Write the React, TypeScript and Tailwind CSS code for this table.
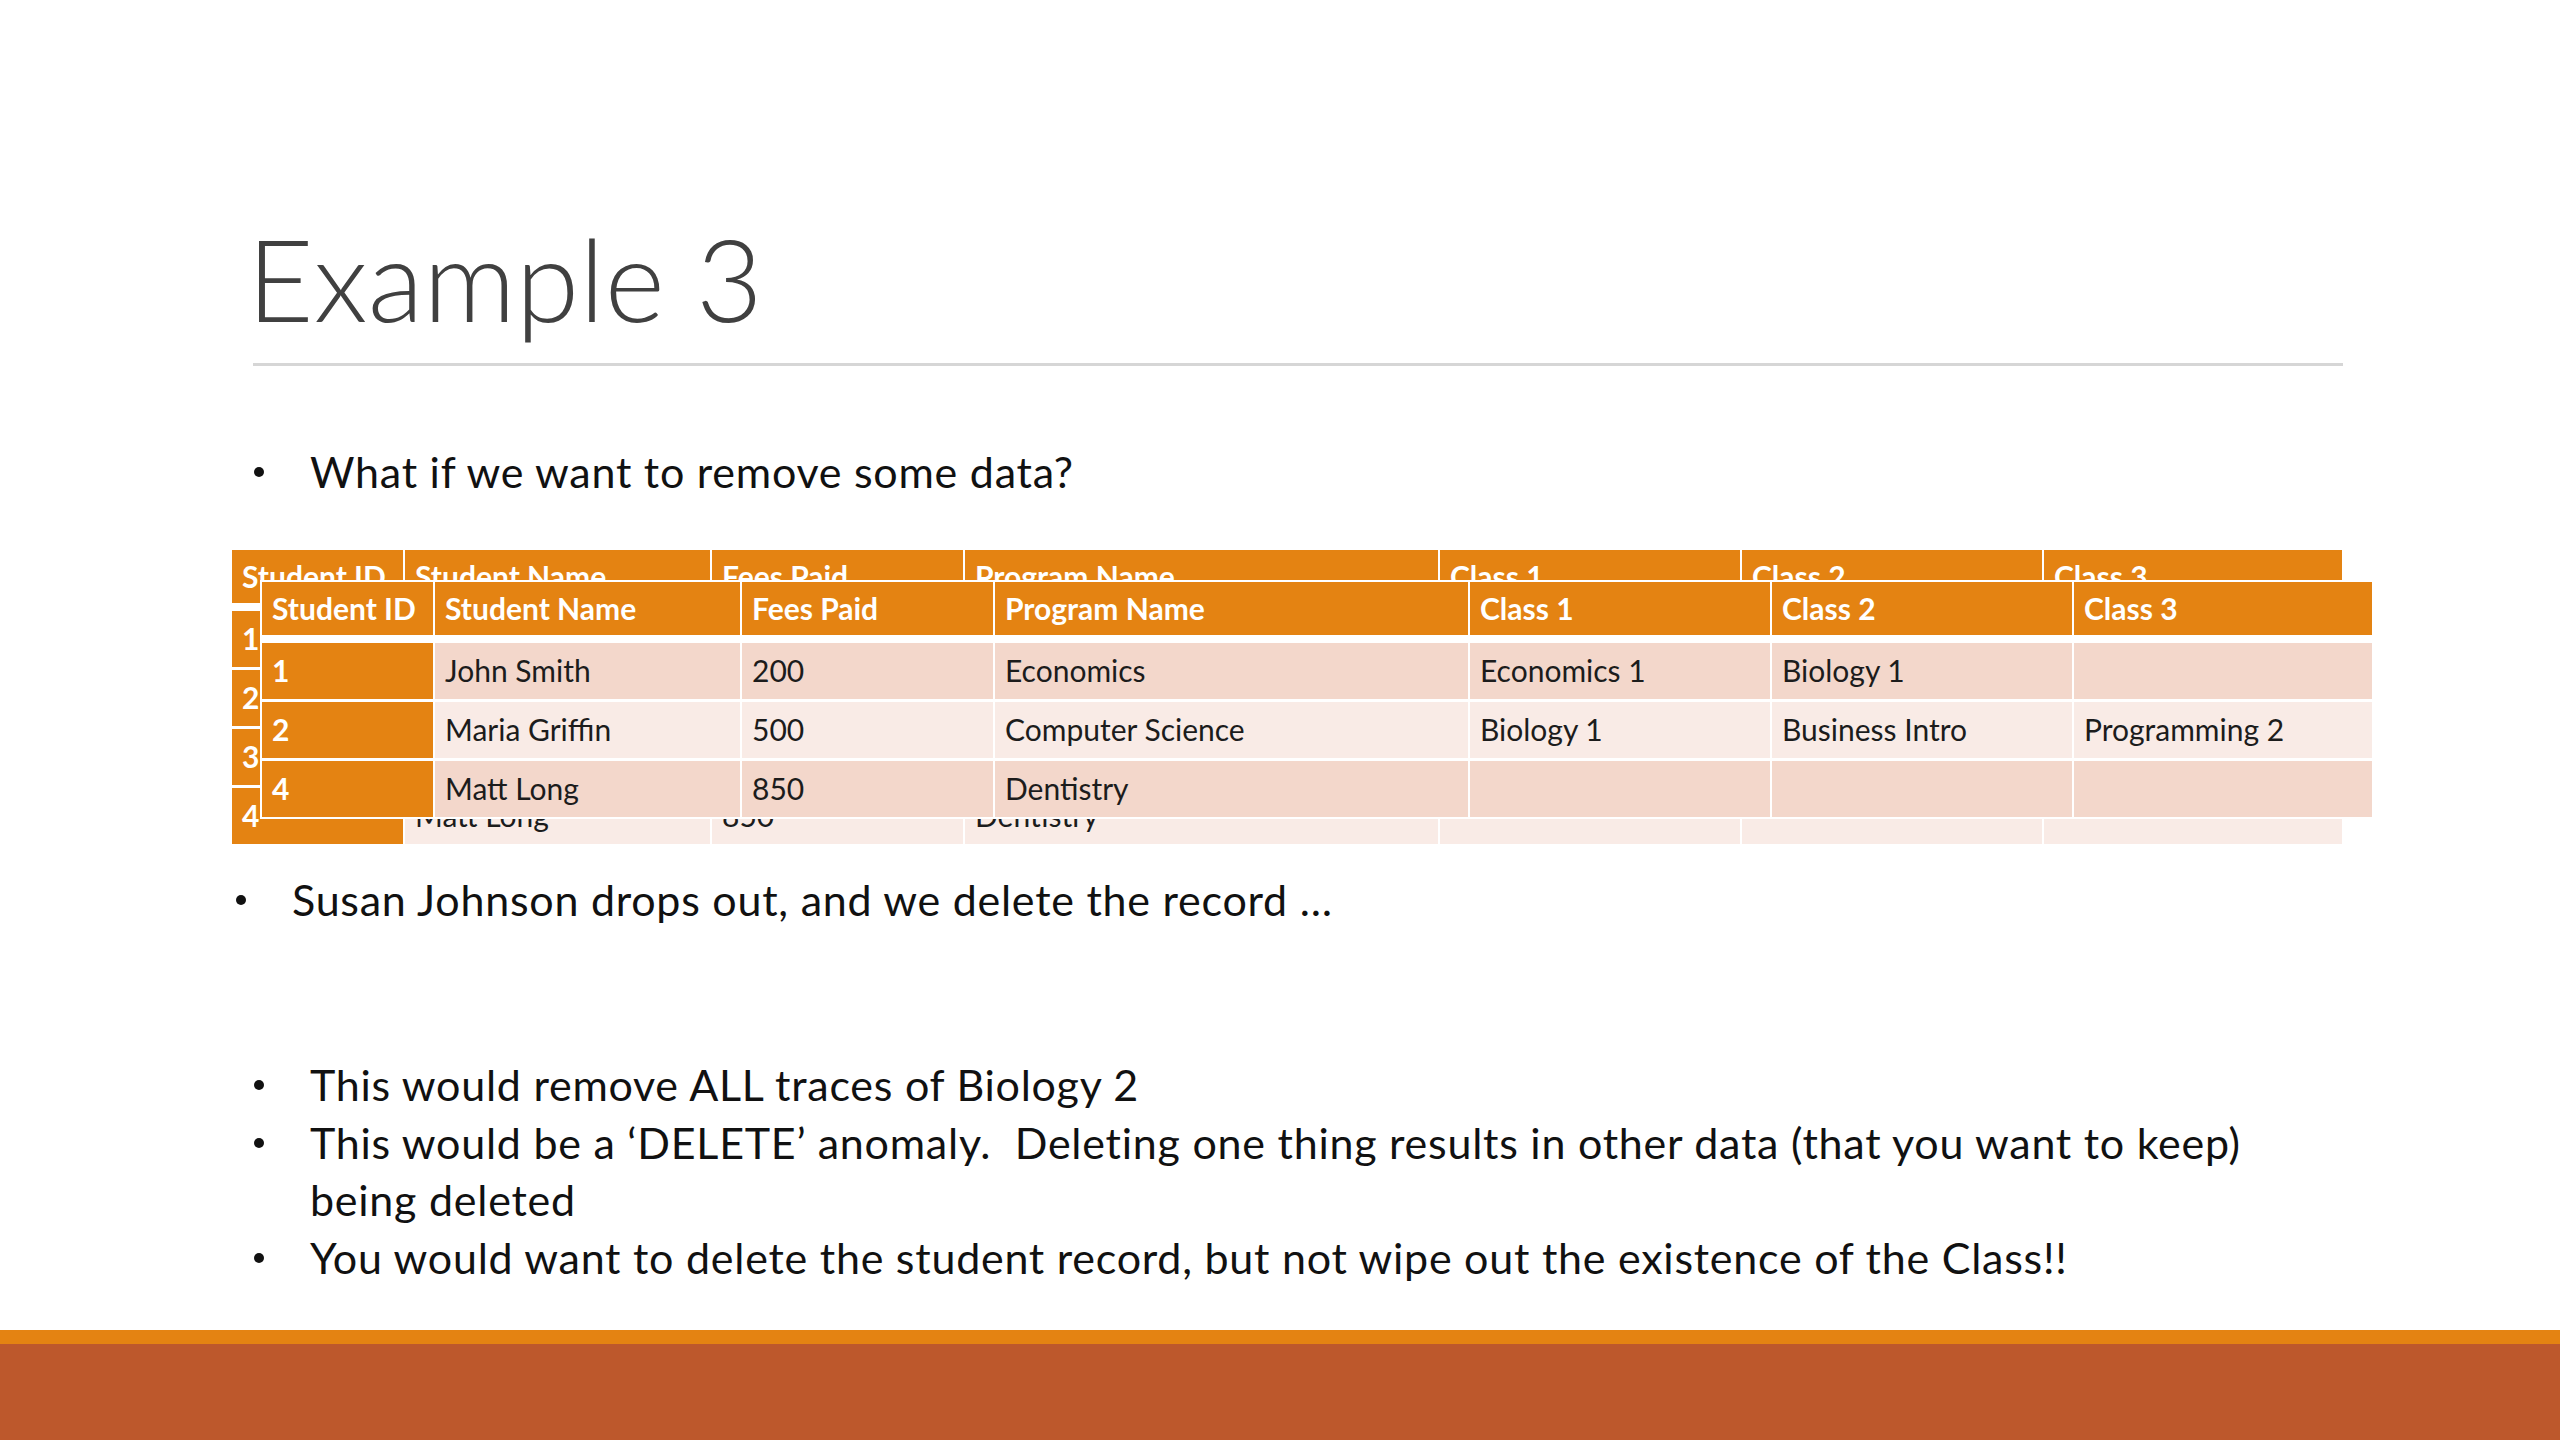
import clsx from "clsx"

const columns = ["Student ID", "Student Name", "Fees Paid", "Program Name", "Class 1", "Class 2", "Class 3"]
const widths = ["w-[171px]", "w-[307px]", "w-[253px]", "w-[475px]", "w-[302px]", "w-[302px]", "w-[300px]"]

// the table before the delete: only the id strip and the last row peek out from behind
const before = [
    ["1", "", "", "", "", "", ""],
    ["2", "", "", "", "", "", ""],
    ["3", "", "", "", "", "", ""],
    ["4", "Matt Long", "850", "Dentistry", "", "", ""],
]

const after = [
    ["1", "John Smith", "200", "Economics", "Economics 1", "Biology 1", ""],
    ["2", "Maria Griffin", "500", "Computer Science", "Biology 1", "Business Intro", "Programming 2"],
    ["4", "Matt Long", "850", "Dentistry", "", "", ""],
]

const StudentTable = ({ rows }: { rows: string[][] }) => {
    return (
        <div className="flex flex-col w-[2110px] bg-white text-[30px]">
            <div className="flex h-[53px] bg-[#e48312]">
                {columns.map((c, i) => (
                    <div
                        key={c}
                        className={clsx(widths[i], "flex items-center px-[10px] whitespace-nowrap font-bold text-white", i > 0 && "border-l-2 border-white")}
                    >
                        {c}
                    </div>
                ))}
            </div>
            <div className="flex flex-col gap-[3px] pt-[8px]">
                {rows.map((row, ri) => (
                    <div key={ri} className={clsx("flex h-[56px]", ri % 2 === 0 ? "bg-[#f3d7cb]" : "bg-[#f9ebe6]")}>
                        {row.map((v, ci) => (
                            <div
                                key={ci}
                                className={clsx(
                                    widths[ci],
                                    "flex items-center px-[10px] whitespace-nowrap",
                                    ci === 0 ? "bg-[#e48312] font-bold text-white" : "text-[#1c1c1c]",
                                    ci > 0 && "border-l-2 border-white"
                                )}
                            >
                                {v}
                            </div>
                        ))}
                    </div>
                ))}
            </div>
        </div>
    )
}

const Bullet = ({ children }: { children: React.ReactNode }) => (
    <div className="grid grid-cols-[57px_1fr] items-start">
        <span className="mt-[24px] ml-[1px] w-[10px] h-[10px] rounded-full bg-[#111]" />
        <span className="whitespace-nowrap">{children}</span>
    </div>
)

const App = () => {
    return (
        <div className="w-[2560px] h-[1440px] bg-white flex flex-col overflow-hidden font-[Lato,sans-serif]">
            <h1 className="pt-[220px] pl-[247px] text-[115px] leading-[114px] font-light text-[#404040]">
                Example 3
            </h1>
            <div className="mt-[29px] ml-[253px] w-[2090px] h-[3px] bg-[#d6d6d6]" />

            <div className="mt-[77px] pl-[253px] text-[43px] leading-[57.6px] tracking-[0.75px] text-[#111]">
                <Bullet>What if we want to remove some data?</Bullet>
            </div>

            <div className="mt-[49px] ml-[232px] relative w-[2110px]">
                <StudentTable rows={before} />
                <div className="absolute left-[30px] top-[32px] ring-2 ring-white">
                    <StudentTable rows={after} />
                </div>
            </div>

            <div className="mt-[27px] pl-[235px] text-[43px] leading-[57.6px] tracking-[0.75px] text-[#111]">
                <Bullet>Susan Johnson drops out, and we delete the record …</Bullet>
            </div>

            <div className="mt-[128px] pl-[253px] text-[43px] leading-[57.6px] tracking-[0.75px] text-[#111]">
                <Bullet>This would remove ALL traces of Biology 2</Bullet>
                <Bullet>
                    This would be a ‘DELETE’ anomaly.{"\u00a0 "}Deleting one thing results in other data (that you want to keep)
                    <br />
                    being deleted
                </Bullet>
                <Bullet>You would want to delete the student record, but not wipe out the existence of the Class!!</Bullet>
            </div>

            <div className="mt-auto h-[14px] bg-[#e48312]" />
            <div className="h-[96px] bg-[#bd582c]" />
        </div>
    )
}

export default App
